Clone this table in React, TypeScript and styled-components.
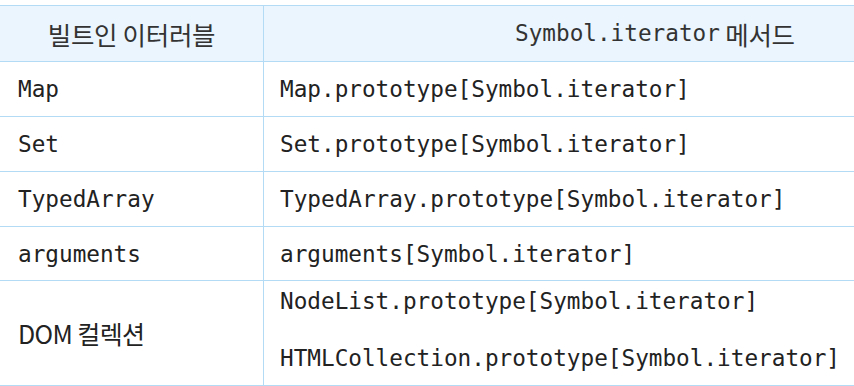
import React from "react";
import styled, { createGlobalStyle } from "styled-components";

const GlobalStyle = createGlobalStyle`
    html, body {
        margin: 0;
        padding: 0;
        background: #ffffff;
    }
`;

const Page = styled.div`
    padding-top: 5px;
    width: 854px;
`;

const Table = styled.div`
    display: grid;
    grid-template-columns: 264px 1fr;
    border-top: 1px solid #b4dbf5;
`;

const HeadCell = styled.div<{ $pad: string; $align: string }>`
    height: 56px;
    display: flex;
    align-items: center;
    justify-content: ${(p) => p.$align};
    padding: ${(p) => p.$pad};
    background: #eaf5fd;
    border-bottom: 1px solid #b4dbf5;
    font-family: "Noto Sans CJK KR", "Noto Sans", sans-serif;
    font-size: 25.5px;
    letter-spacing: -0.3px;
    color: #333;
    box-sizing: border-box;
`;

const HeadLeft = styled(HeadCell)`
    border-right: 1px solid #b4dbf5;
`;

const Cell = styled.div<{ $h: number; $left?: boolean; $multi?: boolean }>`
    height: ${(p) => p.$h}px;
    display: flex;
    flex-direction: column;
    justify-content: center;
    gap: 21px;
    padding-left: ${(p) => (p.$left ? 18 : 16)}px;
    padding-bottom: ${(p) => (p.$multi ? 8 : 0)}px;
    border-bottom: 1px solid #b4dbf5;
    border-right: ${(p) => (p.$left ? "1px solid #b4dbf5" : "none")};
    box-sizing: border-box;
`;

const Mono = styled.span<{ $muted?: boolean }>`
    font-family: "DejaVu Sans Mono", "Liberation Mono", monospace;
    font-size: 22.7px;
    line-height: 36px;
    letter-spacing: 0;
    color: ${(p) => (p.$muted ? "#333" : "#222")};
    white-space: nowrap;
`;

const Sans = styled.span`
    font-family: "Noto Sans CJK KR", "Noto Sans", sans-serif;
    font-size: 25px;
    color: #222;
    letter-spacing: -0.6px;
`;

const rows: { name: string; methods: string[]; h: number; sans?: boolean }[] = [
    { name: "Map", methods: ["Map.prototype[Symbol.iterator]"], h: 55 },
    { name: "Set", methods: ["Set.prototype[Symbol.iterator]"], h: 55 },
    { name: "TypedArray", methods: ["TypedArray.prototype[Symbol.iterator]"], h: 55 },
    { name: "arguments", methods: ["arguments[Symbol.iterator]"], h: 54 },
    {
        name: "DOM 컬렉션",
        methods: ["NodeList.prototype[Symbol.iterator]", "HTMLCollection.prototype[Symbol.iterator]"],
        h: 105,
        sans: true,
    },
];

export default function App() {
    return (
        <Page>
            <GlobalStyle />
            <Table>
                <HeadLeft $pad="0 0 1px 0" $align="center">
                    <span>빌트인 이터러블</span>
                </HeadLeft>
                <HeadCell $pad="0 0 1px 251px" $align="flex-start">
                    <Mono $muted>Symbol.iterator</Mono>
                    <span>&nbsp;메서드</span>
                </HeadCell>
                {rows.map((r) => (
                    <React.Fragment key={r.name}>
                        <Cell $h={r.h} $left>
                            {r.sans ? <Sans>{r.name}</Sans> : <Mono>{r.name}</Mono>}
                        </Cell>
                        <Cell $h={r.h} $multi={r.methods.length > 1}>
                            {r.methods.map((m) => (
                                <Mono key={m}>{m}</Mono>
                            ))}
                        </Cell>
                    </React.Fragment>
                ))}
            </Table>
        </Page>
    );
}
